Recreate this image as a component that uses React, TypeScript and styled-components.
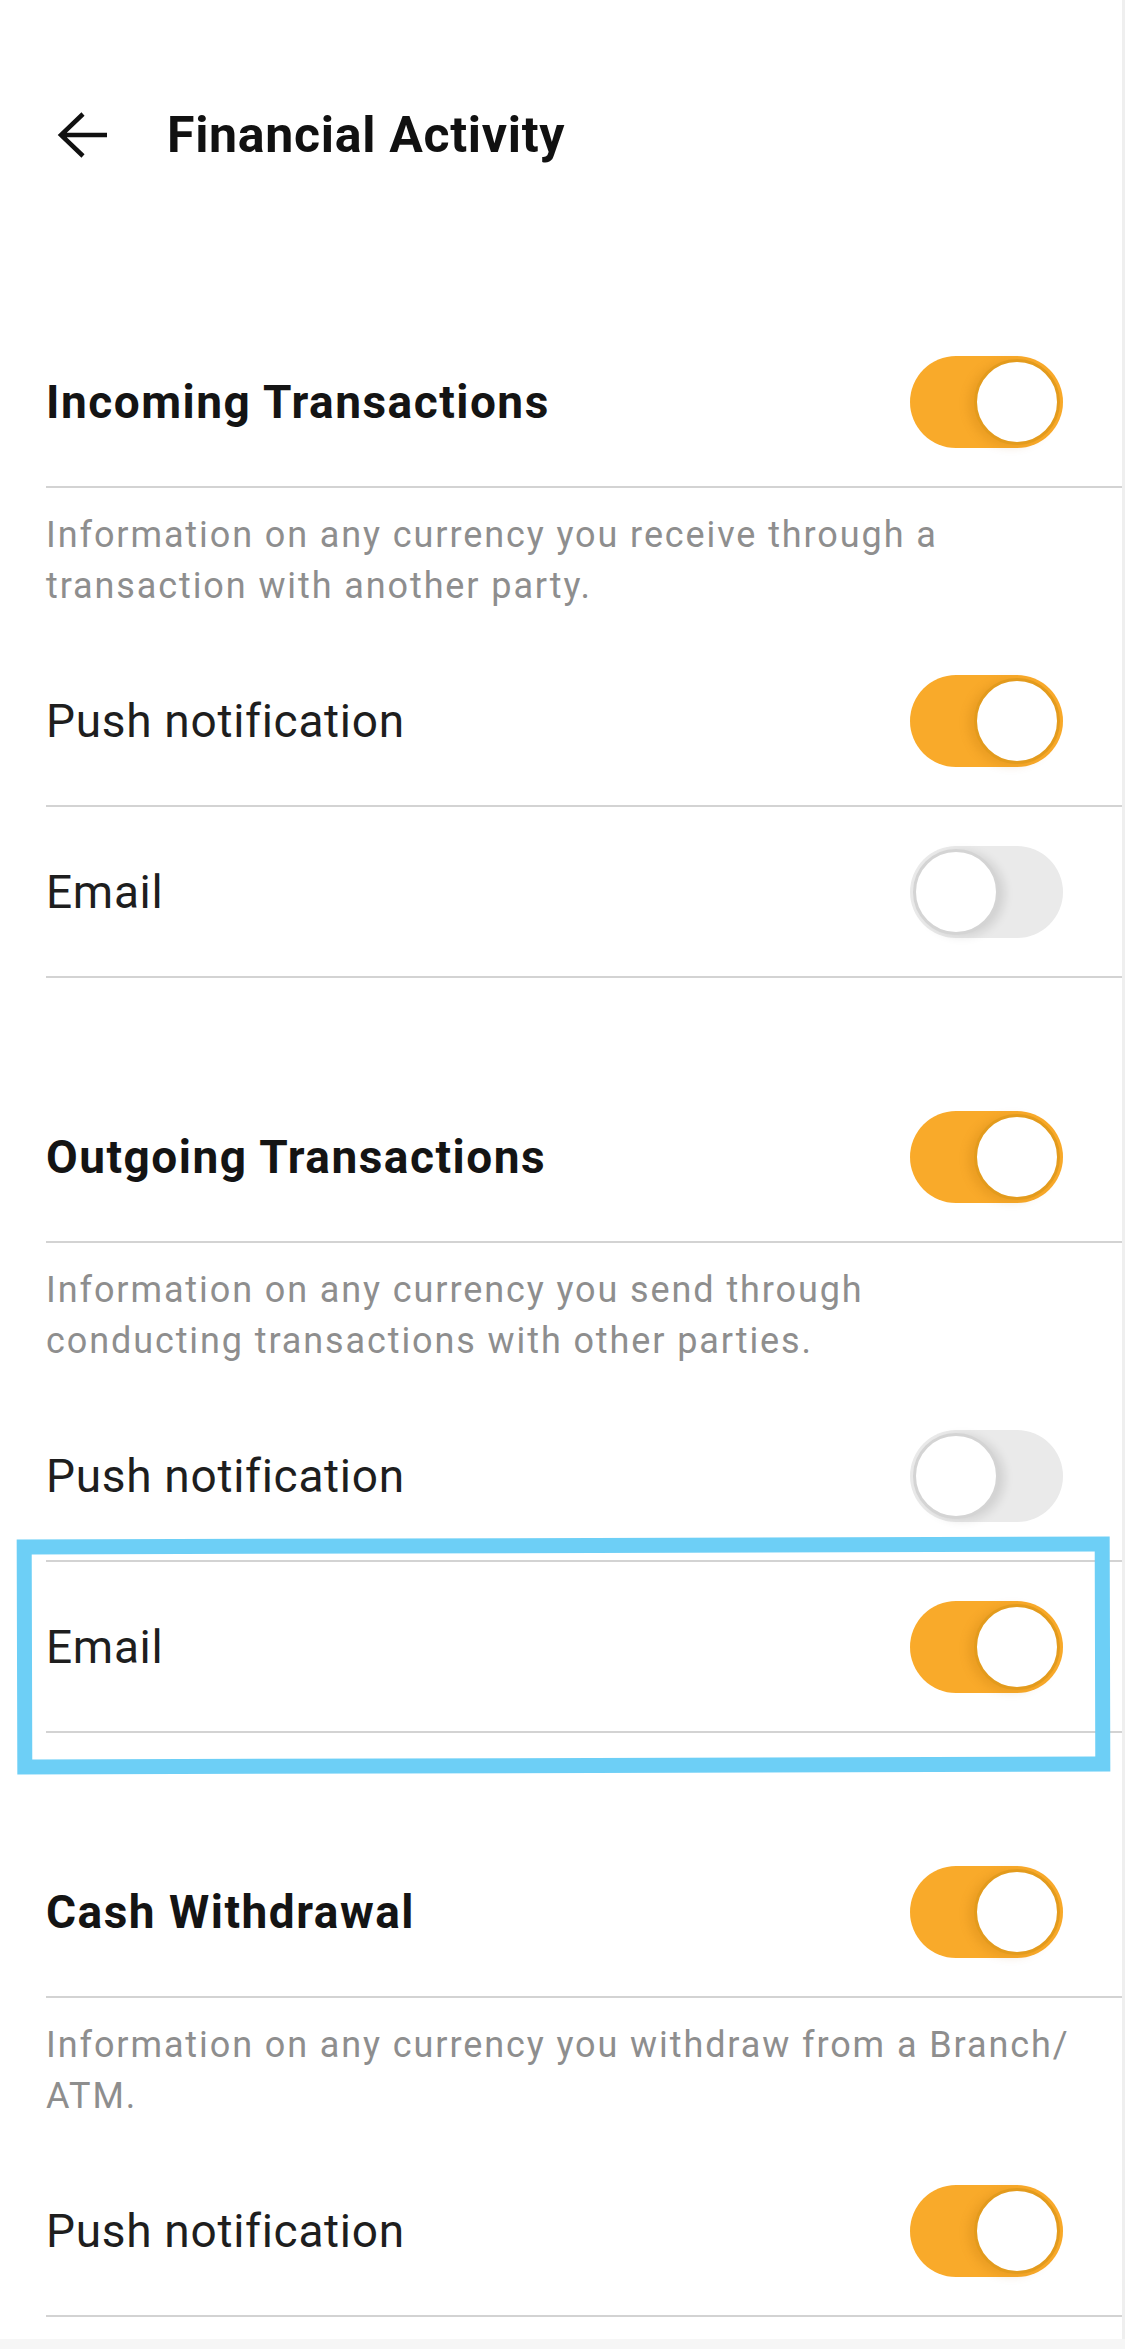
import React from "react";
import styled, { createGlobalStyle } from "styled-components";

const GlobalStyle = createGlobalStyle`
  * { box-sizing: border-box; }
  html, body {
    margin: 0;
    padding: 0;
    background: #f6f6f6;
    font-family: Roboto, "Liberation Sans", Arial, sans-serif;
    -webkit-font-smoothing: antialiased;
  }
`;

const Page = styled.div`
  width: 1125px;
  background: #ffffff;
  border-right: 3px solid #efefef;
  padding-bottom: 22px;
`;

const Header = styled.header`
  height: 270px;
  display: flex;
  align-items: center;
  gap: 58px;
  padding-left: 57px;
`;

const BackButton = styled.button`
  border: none;
  background: none;
  padding: 0;
  width: 52px;
  height: 48px;
  display: flex;
  align-items: center;
  justify-content: center;
  cursor: pointer;
`;

const Title = styled.h1`
  margin: 0;
  font-size: 50px;
  font-weight: 700;
  color: #111111;
  letter-spacing: 0.7px;
`;

const List = styled.main`
  display: flex;
  flex-direction: column;
  gap: 94px;
  padding-top: 47px;
`;

const Section = styled.section`
  display: flex;
  flex-direction: column;
  margin-left: 46px;
`;

const Row = styled.div`
  position: relative;
  min-height: 171px;
  display: flex;
  align-items: center;
  justify-content: space-between;
  padding-right: 59px;
  border-bottom: 2px solid #d3d3d3;
`;

const Heading = styled.h2`
  margin: 0;
  font-size: 46px;
  font-weight: 700;
  color: #141414;
  letter-spacing: 1.5px;
`;

const Label = styled.span`
  font-size: 46px;
  font-weight: 400;
  color: #1e1e1e;
  letter-spacing: 0.7px;
`;

const Description = styled.p`
  margin: 0;
  padding: 22px 0 24px;
  font-size: 36px;
  line-height: 51px;
  color: #8e8e8e;
  letter-spacing: 1.9px;
  white-space: pre-line;
`;

const Track = styled.button<{ $on: boolean }>`
  width: 153px;
  height: 92px;
  border-radius: 46px;
  border: none;
  padding: 3px;
  display: flex;
  justify-content: ${(p) => (p.$on ? "flex-end" : "flex-start")};
  align-items: center;
  background: ${(p) => (p.$on ? "#f9aa2a" : "#eaeaea")};
  cursor: pointer;
  flex-shrink: 0;
`;

const Knob = styled.span<{ $on: boolean }>`
  width: 86px;
  height: 86px;
  border-radius: 50%;
  background: #ffffff;
  border: 3px solid ${(p) => (p.$on ? "#e39b1d" : "#d4d4d4")};
  box-shadow: ${(p) =>
    p.$on
      ? "-6px 2px 10px rgba(170, 100, 0, 0.18)"
      : "6px 2px 10px rgba(0, 0, 0, 0.1)"};
`;

const Highlight = styled.div`
  position: absolute;
  left: -29px;
  top: -24px;
  width: 1093px;
  height: 235px;
  border: 15px solid #6dcff6;
  transform: rotate(-0.16deg);
  pointer-events: none;
`;

const Toggle: React.FC<{ on: boolean }> = ({ on }) => (
  <Track $on={on} aria-pressed={on}>
    <Knob $on={on} />
  </Track>
);

type Item = {
  title: string;
  desc: string;
  rows: { label: string; on: boolean; highlight?: boolean }[];
};

const sections: Item[] = [
  {
    title: "Incoming Transactions",
    desc: "Information on any currency you receive through a\ntransaction with another party.",
    rows: [
      { label: "Push notification", on: true },
      { label: "Email", on: false },
    ],
  },
  {
    title: "Outgoing Transactions",
    desc: "Information on any currency you send through\nconducting transactions with other parties.",
    rows: [
      { label: "Push notification", on: false },
      { label: "Email", on: true, highlight: true },
    ],
  },
  {
    title: "Cash Withdrawal",
    desc: "Information on any currency you withdraw from a Branch/\nATM.",
    rows: [{ label: "Push notification", on: true }],
  },
];

export default function App() {
  return (
    <>
      <GlobalStyle />
      <Page>
        <Header>
          <BackButton aria-label="Back">
            <svg width="52" height="48" viewBox="0 0 52 48" fill="none">
              <path
                d="M50 24H5M26 3L4 24L26 45"
                stroke="#111"
                strokeWidth="4.5"
                strokeLinejoin="miter"
              />
            </svg>
          </BackButton>
          <Title>Financial Activity</Title>
        </Header>
        <List>
          {sections.map((s) => (
            <Section key={s.title}>
              <Row>
                <Heading>{s.title}</Heading>
                <Toggle on={true} />
              </Row>
              <Description>{s.desc}</Description>
              {s.rows.map((r) => (
                <Row key={r.label}>
                  <Label>{r.label}</Label>
                  <Toggle on={r.on} />
                  {r.highlight && <Highlight />}
                </Row>
              ))}
            </Section>
          ))}
        </List>
      </Page>
    </>
  );
}
